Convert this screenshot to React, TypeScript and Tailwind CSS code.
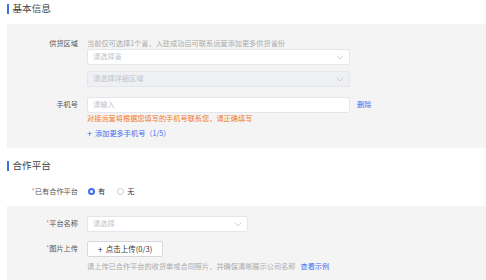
import React from "react";

const font = { fontFamily: '"Noto Sans CJK SC", "Noto Sans", sans-serif' };

function Chevron() {
  return (
    <svg width="8" height="5" viewBox="0 0 8 5" className="shrink-0">
      <path d="M0.8 0.8 L4 4 L7.2 0.8" fill="none" stroke="#c0c4cc" strokeWidth="0.8" />
    </svg>
  );
}

function SectionTitle({ children }: { children: React.ReactNode }) {
  return (
    <div className="flex items-center h-[11px] pl-[7px]">
      <div className="w-[1.5px] h-[10px] bg-[#3a6ff0]" />
      <div className="ml-[4px] text-[9.6px] leading-none text-[#444]">{children}</div>
    </div>
  );
}

function Label({ children, req }: { children: React.ReactNode; req?: boolean }) {
  return (
    <div className="w-[71px] shrink-0 text-right text-[7.2px] leading-none text-[#555]">
      {req && <span className="text-[#f56c6c]">*</span>}
      {children}
    </div>
  );
}

export default function App() {
  return (
    <div className="w-[486px] h-[280px] bg-white overflow-hidden" style={font}>
      <div className="pt-[3px]">
        <SectionTitle>基本信息</SectionTitle>
      </div>
      <div className="ml-[7px] mt-[10px] h-[124px] bg-[#f4f4f5] pt-[15px]">
        <div className="flex items-center h-[9px]">
          <Label>供货区域</Label>
          <div className="ml-[9px] text-[7.2px] leading-none text-[#aaa]">
            当前仅可选择1个省，入驻成功后可联系运营添加更多供货省份
          </div>
        </div>
        <div className="ml-[80px] mt-[1px] w-[263px] h-[16px] bg-white border border-[#e4e6eb] rounded-[2px] flex items-center justify-between px-[5px]">
          <span className="text-[7.2px] leading-none text-[#c0c4cc]">请选择省</span>
          <Chevron />
        </div>
        <div className="ml-[80px] mt-[6px] w-[263px] h-[16px] bg-[#eff0f3] border border-[#e4e6eb] rounded-[2px] flex items-center justify-between px-[5px]">
          <span className="text-[7.2px] leading-none text-[#c0c4cc]">请选择详细区域</span>
          <Chevron />
        </div>
        <div className="flex items-center mt-[10px] h-[16px]">
          <Label>手机号</Label>
          <div className="ml-[9px] w-[263px] h-[16px] bg-white border border-[#e4e6eb] rounded-[2px] flex items-center px-[5px]">
            <span className="text-[7.2px] leading-none text-[#c0c4cc]">请输入</span>
          </div>
          <div className="ml-[7px] text-[7.2px] leading-none text-[#3a6ff0]">删除</div>
        </div>
        <div className="ml-[80px] mt-[1px] h-[9px] flex items-center text-[7.2px] leading-none text-[#f5762a]">
          对接运营将根据您填写的手机号联系您，请正确填写
        </div>
        <div className="ml-[80px] mt-[6px] h-[9px] flex items-center text-[7.2px] leading-none text-[#3a6ff0]">
          <span className="mr-[3px] text-[9px] leading-none">+</span>添加更多手机号（1/5）
        </div>
      </div>
      <div className="mt-[12px]">
        <SectionTitle>合作平台</SectionTitle>
      </div>
      <div className="flex items-center mt-[16px] h-[9px]">
        <div className="w-[78px] shrink-0 text-right text-[7.2px] leading-none text-[#555]">
          <span className="text-[#f56c6c]">*</span>已有合作平台
        </div>
        <div className="ml-[10px] flex items-center">
          <span className="w-[7px] h-[7px] rounded-full border-[2px] border-[#3a6ff0] bg-white" />
          <span className="ml-[3px] text-[7.2px] leading-none text-[#333]">有</span>
          <span className="ml-[12px] w-[7px] h-[7px] rounded-full border border-[#ccc] bg-white" />
          <span className="ml-[3px] text-[7.2px] leading-none text-[#333]">无</span>
        </div>
      </div>
      <div className="ml-[7px] mt-[10px] h-[80px] bg-[#f4f4f5] pt-[10px]">
        <div className="flex items-center h-[16px]">
          <Label req>平台名称</Label>
          <div className="ml-[9px] w-[161px] h-[16px] bg-white border border-[#e4e6eb] rounded-[2px] flex items-center justify-between px-[5px]">
            <span className="text-[7.2px] leading-none text-[#c0c4cc]">请选择</span>
            <Chevron />
          </div>
        </div>
        <div className="flex items-center mt-[9px] h-[16px]">
          <Label req>图片上传</Label>
          <div className="ml-[9px] w-[76px] h-[16px] bg-white border border-[#d5d8de] rounded-[2px] flex items-center justify-center text-[7.5px] leading-none text-[#333]">
            <span className="mr-[3px] text-[9px] leading-none">+</span>点击上传(0/3)
          </div>
        </div>
        <div className="ml-[80px] mt-[5px] h-[9px] flex items-center text-[7.2px] leading-none text-[#aaa]">
          请上传已合作平台的收货单或合同照片，并确保清晰展示公司名称
          <span className="ml-[5px] text-[#3a6ff0]">查看示例</span>
        </div>
      </div>
    </div>
  );
}
